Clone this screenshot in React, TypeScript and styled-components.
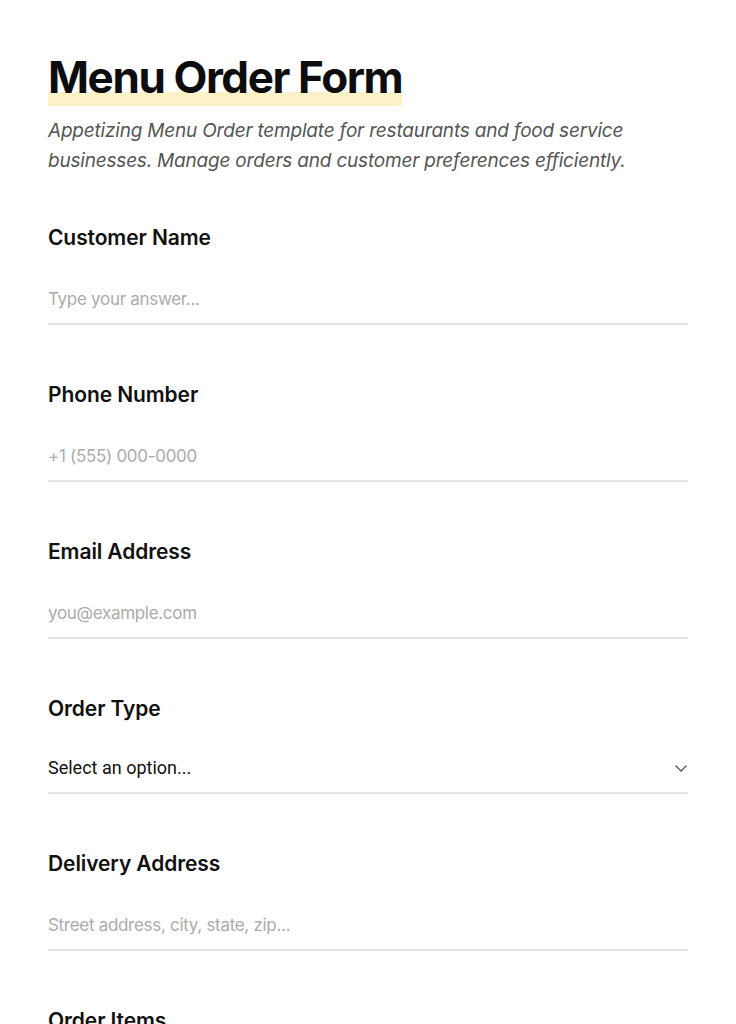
import React from "react";
import styled, { createGlobalStyle } from "styled-components";

const Global = createGlobalStyle`
  html, body { margin: 0; padding: 0; background: #ffffff; }
  body { font-family: "Inter", "Noto Sans", sans-serif; color: #111; }
  * { box-sizing: border-box; }
`;

const Page = styled.main`
  padding: 48px 48px 0;
  width: 736px;
`;

const Header = styled.header`
  display: flex;
  flex-direction: column;
  align-items: flex-start;
  margin-bottom: 47px;
`;

const Title = styled.h1`
  display: inline-block;
  margin: 0;
  font-size: 44px;
  font-weight: 700;
  letter-spacing: -1.4px;
  line-height: 58px;
  color: #0d0d0d;
  background: linear-gradient(to bottom, transparent 76%, #fdf1c8 76%);
`;

const Subtitle = styled.p`
  margin: 10px 0 0;
  font-size: 19px;
  font-style: italic;
  line-height: 30px;
  color: #555555;
  max-width: 590px;
  letter-spacing: -0.2px;
`;

const Form = styled.form`
  display: flex;
  flex-direction: column;
  gap: 55px;
`;

const Field = styled.label<{ $compact?: boolean }>`
  display: flex;
  flex-direction: column;
  gap: ${(p) => (p.$compact ? 32 : 34)}px;
`;

const Label = styled.span`
  font-size: 21px;
  font-weight: 600;
  letter-spacing: -0.1px;
  line-height: 30px;
  color: #111;
`;

const Input = styled.input`
  border: none;
  border-bottom: 2px solid #e5e5e5;
  padding: 0 0 12px;
  font-family: "Inter", sans-serif;
  font-size: 17px;
  line-height: 24px;
  color: #111;
  outline: none;
  background: transparent;
  &::placeholder { color: #ababab; letter-spacing: -0.3px; }
`;

const SelectWrap = styled.div`
  display: flex;
  align-items: center;
  justify-content: space-between;
  border-bottom: 2px solid #e5e5e5;
  padding: 0 0 12px;
`;

const SelectText = styled.span`
  font-family: "Roboto", sans-serif;
  font-size: 18px;
  line-height: 24px;
  color: #111;
`;

const Chevron = () => (
  <svg width="14" height="14" viewBox="0 0 14 14" fill="none">
    <path d="M2 5l5 5 5-5" stroke="#555" strokeWidth="1.4" strokeLinecap="round" strokeLinejoin="round" />
  </svg>
);

export default function App() {
  return (
    <>
      <Global />
      <Page>
        <Header>
          <Title>Menu Order Form</Title>
          <Subtitle>
            Appetizing Menu Order template for restaurants and food service businesses. Manage orders and customer preferences efficiently.
          </Subtitle>
        </Header>
        <Form>
          <Field>
            <Label>Customer Name</Label>
            <Input placeholder="Type your answer..." />
          </Field>
          <Field>
            <Label>Phone Number</Label>
            <Input placeholder="+1 (555) 000-0000" />
          </Field>
          <Field>
            <Label>Email Address</Label>
            <Input placeholder="you@example.com" />
          </Field>
          <Field as="div" $compact>
            <Label>Order Type</Label>
            <SelectWrap>
              <SelectText>Select an option...</SelectText>
              <Chevron />
            </SelectWrap>
          </Field>
          <Field>
            <Label>Delivery Address</Label>
            <Input placeholder="Street address, city, state, zip..." />
          </Field>
          <Field>
            <Label>Order Items</Label>
            <Input placeholder="Type your answer..." />
          </Field>
        </Form>
      </Page>
    </>
  );
}
